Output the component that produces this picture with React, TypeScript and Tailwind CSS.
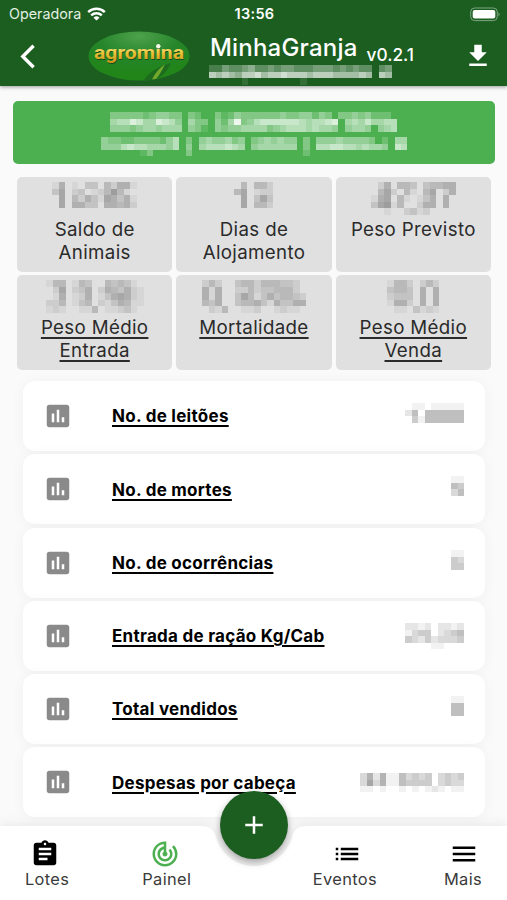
import React from 'react';
import {
    MdAdd, MdAssessment, MdAssignment,
    MdFileDownload, MdList, MdMenu, MdTrackChanges,
} from 'react-icons/md';

const CELL = 6.53;

// Censored value: every digit is the strength of one cell
const Mosaic = ({ rows, color, className = '' }: { rows: string[]; color: string; className?: string }) => {
    const width = rows[0].length * CELL;
    const height = rows.length * CELL;

    return (
        <svg className={`block shrink-0 ${className}`} width={width} height={height} viewBox={`0 0 ${width} ${height}`} shapeRendering="crispEdges">
            {rows.map((row, y) => row.split('').map((c, x) => (
                c !== '0' && <rect key={`${x}-${y}`} x={x * CELL} y={y * CELL} width={CELL} height={CELL} fill={color} opacity={Number(c) / 10} />
            )))}
        </svg>
    );
};

const STATS = [
    { label: 'Saldo de Animais', link: false, rows: ['1501033042551', '3602301247410', '0604253165351', '0605533055452', '0000000000000'] },
    { label: 'Dias de Alojamento', link: false, rows: ['040442', '460122', '060363', '060442', '000000'] },
    { label: 'Peso Previsto', link: false, rows: ['0250443034455', '0462041046025', '1560410135050', '3671400255050', '0010023120000'] },
    { label: 'Peso Médio Entrada', link: true, rows: ['144014300434310', '026023502543521', '015012501356521', '224013402135411', '121001140112310'] },
    { label: 'Mortalidade', link: true, rows: ['2420034424443320', '5150022423344420', '5150036413534432', '4350034453153355', '0214001120012110'] },
    { label: 'Peso Médio Venda', link: true, rows: ['14420242', '34430505', '23330505', '15520505', '01103121'] },
];

const ITEMS = [
    { label: 'No. de leitões', rows: ['011011111', '250555555', '041555555', '000000000'] },
    { label: 'No. de mortes', rows: ['11', '54', '35', '00'] },
    { label: 'No. de ocorrências', rows: ['11', '43', '44', '00'] },
    { label: 'Entrada de ração Kg/Cab', rows: ['221202212', '134402345', '432423334', '000011000'] },
    { label: 'Total vendidos', rows: ['11', '55', '55', '00'] },
    { label: 'Despesas por cabeça', rows: ['3626115343403434', '3736115444403433', '1101001010121011'] },
];

const Logo = () => (
    <svg className="block shrink-0" width="104" height="52" viewBox="0 0 104 52">
        <defs>
            <radialGradient id="leaf" cx="50%" cy="10%" r="75%">
                <stop offset="0" stopColor="#4da14b" />
                <stop offset="0.55" stopColor="#25852a" />
                <stop offset="1" stopColor="#21851a" />
            </radialGradient>
            <linearGradient id="gold" x1="0" y1="0" x2="0" y2="1">
                <stop offset="0.2" stopColor="#f8e58a" />
                <stop offset="0.55" stopColor="#e8c034" />
                <stop offset="1" stopColor="#c78c16" />
            </linearGradient>
        </defs>
        <ellipse cx="52" cy="26" rx="50.5" ry="24.5" fill="url(#leaf)" />
        <path d="M57 50 C63 41 71 37 84 33 C80 42 74 48 66 50Z" fill="#1b5e20" opacity="0.65" />
        <path d="M65 49.5 C68 43 72 38 78 34.5 C75 40 72 46 69 49Z" fill="#73a82c" />
        <text x="7.7" y="29.7" fontFamily="Roboto" fontWeight="700" fontSize="19" textLength="90" lengthAdjust="spacingAndGlyphs" fill="#17501a">agromina</text>
        <text x="7" y="28.9" fontFamily="Roboto" fontWeight="700" fontSize="19" textLength="90" lengthAdjust="spacingAndGlyphs" fill="url(#gold)">agromina</text>
        <circle cx="71.3" cy="16.3" r="2.2" fill="#f2f7e6" />
    </svg>
);

const Header = () => (
    <header className="relative z-10 h-[86px] shrink-0 bg-[#1b5e20] text-white shadow-[0_1px_4px_rgba(0,0,0,0.4)]">
        <div className="grid h-7 grid-cols-3 items-center pl-[9px] pr-[7px]">
            <div className="flex items-center gap-[6px] text-[14.3px] leading-5 text-[#e3efe3]">
                Operadora
                <svg width="19" height="14" viewBox="0 0 19 14" fill="none" stroke="#fff" strokeWidth="2.5">
                    <path d="M1.2 5.1a12 12 0 0 1 16.6 0" />
                    <path d="M4.2 8.3a7.7 7.7 0 0 1 10.6 0" />
                    <path d="M9.5 13.6 6.5 10.7a4.3 4.3 0 0 1 6 0Z" fill="#fff" stroke="none" />
                </svg>
            </div>
            <div className="text-center text-[14.5px] font-semibold tracking-[0.3px]">13:56</div>
            <svg className="justify-self-end" width="30" height="15" viewBox="0 0 30 15">
                <rect x="0.7" y="1" width="26.6" height="12.6" rx="4" fill="none" stroke="#7fa582" />
                <rect x="2.7" y="3" width="22.6" height="8.6" rx="2" fill="#fff" />
                <path d="M28.5 5.2v4.2c1.4-.6 1.4-3.6 0-4.2Z" fill="#7fa582" />
            </svg>
        </div>
        <div className="flex h-[56px] items-center">
            <svg className="ml-[13px] shrink-0" width="29" height="29" viewBox="0 0 29 29" fill="none" stroke="#fff" strokeWidth="3.4">
                <path d="M20.6 3.8 9.8 14.5 20.6 25.2" />
            </svg>
            <div className="ml-[45px]"><Logo /></div>
            <div className="ml-[18px] flex-1 self-start pt-[5px]">
                <div className="ml-px flex items-baseline whitespace-nowrap">
                    <span className="text-[24px] font-medium leading-[30px] tracking-[0.2px]">MinhaGranja</span>
                    <span className="relative top-[5px] ml-[9px] text-[17.3px] font-medium">v0.2.1</span>
                </div>
                <Mosaic
                    color="#fff"
                    className="mt-[2px]"
                    rows={['2243345334344333444343433034', '7676577867787776777666676076', '0000010000000010000000000000']}
                />
            </div>
            <MdFileDownload className="mr-[14px] size-[30px] shrink-0" />
        </div>
    </header>
);

const StatCard = ({ label, link, rows }: { label: string; link: boolean; rows: string[] }) => (
    <div className="flex h-[95px] flex-col items-center rounded-[5px] bg-[#e0e0e0] pt-[5px] text-center text-[#2b2b2b]">
        <Mosaic rows={rows} color="#808080" />
        <div className={`mt-[3px] w-[136px] text-[18.7px] leading-[23.3px] tracking-[0.35px] ${link ? 'underline decoration-[1.5px] underline-offset-[3px]' : ''}`}>
            {label}
        </div>
    </div>
);

const NavItem = ({ label, icon, className = '' }: { label: string; icon: React.ReactNode; className?: string }) => (
    <button className={`relative flex flex-col items-center pt-[13px] ${className}`}>
        {icon}
        <span className="text-[16.4px] leading-5 tracking-[0.35px] text-[#3a3a3a]">{label}</span>
    </button>
);

export default function App() {
    return (
        <div className="relative flex h-[900px] w-full flex-col overflow-hidden bg-[#fafafa] font-['Inter','Liberation_Sans',sans-serif]">
            <Header />

            <main className="min-h-0 flex-1 overflow-hidden">
                <div className="ml-[13px] mr-[12px] mt-[15px] flex h-[63px] flex-col items-center rounded-[5px] bg-[#4caf50] pt-[11px]">
                    <Mosaic
                        color="#fff"
                        rows={[
                            '33333234433032003124333333433442430334342220',
                            '56687558764053304259346777777656678056575566',
                            '44434554555043104344555534566656554045540456',
                        ]}
                    />
                    <Mosaic
                        color="#fff"
                        className="mt-[5px]"
                        rows={[
                            '43322333324603045445340345454403044454444302055',
                            '44467665554604056667650455555503066776656554076',
                            '00000013000003000000000000000002000000000000000',
                        ]}
                    />
                </div>

                <div className="ml-[17px] mr-[16px] mt-[13px] grid grid-cols-3 gap-x-[4px] gap-y-[3px]">
                    {STATS.map((s) => <StatCard key={s.label} {...s} />)}
                </div>

                <div className="ml-[23px] mr-[22px] mt-[11px] flex flex-col gap-[3.3px]">
                    {ITEMS.map((item) => (
                        <div key={item.label} className="flex h-[70px] shrink-0 items-center rounded-[12px] bg-white pl-[20px] pr-[21px] shadow-[0_1px_14px_rgba(0,0,0,0.045)]">
                            <MdAssessment className="size-[30px] shrink-0 text-[#8a8a8a]" />
                            <span className="ml-[39px] flex-1 whitespace-nowrap pt-[2px] text-[17px] font-bold tracking-[0.27px] text-black underline decoration-[1.5px] underline-offset-[3px]">
                                {item.label}
                            </span>
                            <Mosaic rows={item.rows} color="#808080" />
                        </div>
                    ))}
                </div>
            </main>

            <nav className="relative flex h-[74px] shrink-0 justify-between px-[25px]">
                {/* Bar with the notch for the add button */}
                <svg className="absolute inset-0 drop-shadow-[0_-1px_6px_rgba(0,0,0,0.08)]" width="507" height="74" viewBox="0 0 507 74">
                    <path d="M0 0H200C211 0 214 4 216 11C221 28 236 40 254 40S287 28 292 11C294 4 297 0 308 0H507V74H0Z" fill="#fff" />
                </svg>
                <NavItem label="Lotes" icon={<MdAssignment className="mr-[4px] size-[30px] text-black" />} />
                <NavItem className="mr-auto ml-[73px]" label="Painel" icon={<MdTrackChanges className="mr-[4px] size-[30px] text-[#4caf50]" />} />
                <NavItem className="mr-[67px]" label="Eventos" icon={<MdList className="ml-[4px] size-[30px] text-black" />} />
                <NavItem label="Mais" icon={<MdMenu className="ml-[2px] size-[30px] text-black" />} />
            </nav>

            <button className="absolute bottom-[41px] left-[220px] flex size-[68px] items-center justify-center rounded-full bg-[#1b5e20] text-white shadow-[0_3px_7px_rgba(0,0,0,0.35)]">
                <MdAdd className="size-[30px]" />
            </button>
        </div>
    );
}
